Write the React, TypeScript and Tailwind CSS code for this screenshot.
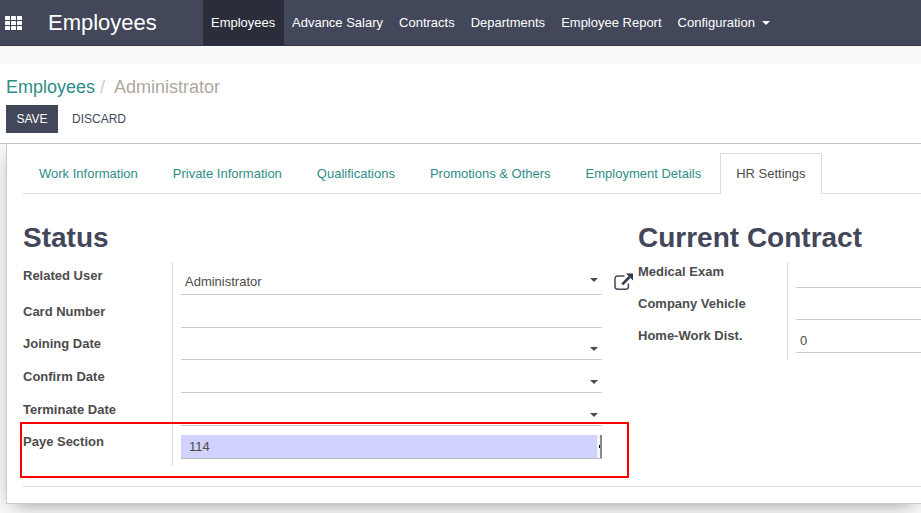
import type { ReactNode } from "react";

const menu = ["Advance Salary", "Contracts", "Departments", "Employee Report"];

const tabs = [
  "Work Information",
  "Private Information",
  "Qualifications",
  "Promotions & Others",
  "Employment Details",
];

function Caret() {
  return (
    <svg width="8" height="4" viewBox="0 0 8 4" fill="currentColor" aria-hidden="true">
      <path d="M0 0h8L4 4z" />
    </svg>
  );
}

function AppsIcon() {
  const cells = [0, 6, 12];
  return (
    <svg width="17" height="14" viewBox="0 0 17 14" fill="currentColor" aria-hidden="true">
      {cells.map((x) =>
        [0, 5, 10].map((y) => <rect key={`${x}-${y}`} x={x} y={y} width="5" height="4" rx="0.6" />)
      )}
    </svg>
  );
}

function ExternalLinkIcon() {
  return (
    <svg width="20" height="18" viewBox="0 0 20 18" fill="none" aria-hidden="true">
      <path
        d="M10.5 3H3.6A2.6 2.6 0 0 0 1 5.600v8A2.600 2.600 0 0 0 3.600 16.200h8.200a2.600 2.600 0 0 0 2.600-2.600V10.500"
        stroke="#43475a"
        strokeWidth="1.5"
      />
      <path d="M8.300 11.300L15.500 4" stroke="#353949" strokeWidth="2.600" />
      <path d="M12 0.500h7v7z" fill="#353949" />
    </svg>
  );
}

type RowProps = {
  id: string;
  label: string;
  children?: ReactNode;
  last?: boolean;
  tall?: boolean;
};

function Row({ id, label, children, last, tall }: RowProps) {
  return (
    <div className="grid grid-cols-[149px_1fr]">
      <label
        htmlFor={id}
        className={`self-end font-bold leading-5 text-[#4c4c4c] ${
          last ? "pb-3.5" : tall ? "pb-3" : "pb-[9px]"
        }`}
      >
        {label}
      </label>
      <div className={`flex items-end border-l border-[#ddd] pl-2 ${last ? "pb-[7px]" : "pb-[3px]"}`}>
        {children}
      </div>
    </div>
  );
}

type FieldProps = { id: string; value?: string; dropdown?: boolean; raised?: boolean };

function TextField({ id, value = "", dropdown, raised }: FieldProps) {
  return (
    <div className="flex h-6 min-w-0 flex-1 items-center border-b border-[#ccc]">
      <input
        id={id}
        defaultValue={value}
        className={`h-full min-w-0 flex-1 bg-transparent px-1 text-[#4c4c4c] outline-none ${
          raised ? "pb-0.5" : ""
        }`}
      />
      {dropdown && (
        <button
          type="button"
          aria-label="Open list"
          className={`self-end px-1 text-[#4c4c4c] ${raised ? "pb-3" : "pb-2"}`}
        >
          <Caret />
        </button>
      )}
    </div>
  );
}

export default function App() {
  return (
    <div className="min-h-screen overflow-hidden bg-[#f9f9f9] font-['Liberation_Sans',Arial,sans-serif] text-[13px] text-[#4c4c4c]">
      <header className="flex h-[46px] items-stretch border-b border-[#2f3342] bg-[#43475a] text-white">
        <button type="button" aria-label="Applications" className="pl-[5px]">
          <AppsIcon />
        </button>
        <div className="flex w-[181px] items-center pl-[26px] text-[22px]">Employees</div>
        <nav className="flex items-stretch whitespace-nowrap">
          <a href="#employees" className="flex min-w-[81px] items-center bg-[#2b2e3a] px-2">
            Employees
          </a>
          {menu.map((item) => (
            <a key={item} href="#menu" className="flex items-center px-2">
              {item}
            </a>
          ))}
          <button type="button" className="flex items-center gap-[7px] px-2">
            Configuration
            <Caret />
          </button>
        </nav>
      </header>

      <section className="mt-[18px] h-20 border-b border-[#c4c4c4] bg-white px-1.5 pt-[11px]">
        <div className="flex gap-[5px] text-[18px] leading-6">
          <a href="#employees" className="text-[#2f8d88]">
            Employees
          </a>
          <span className="text-[#ccc]">/</span>
          <span className="pl-1 text-[#aea79f]">Administrator</span>
        </div>
        <div className="mt-1.5 flex text-xs">
          <button type="button" className="h-7 min-w-[52px] bg-[#43475a] px-2.5 uppercase text-white">
            Save
          </button>
          <button type="button" className="h-7 px-3.5 uppercase text-[#43475a]">
            Discard
          </button>
        </div>
      </section>

      <main className="overflow-hidden pb-2.5 pl-1.5">
        <div className="relative border-b border-l border-[#ccc] bg-white pl-4 pt-[9px] shadow-[0_5px_20px_-8px_#777]">
          <div role="tablist" className="flex gap-[3px] whitespace-nowrap border-b border-[#ddd]">
            {tabs.map((tab) => (
              <button key={tab} type="button" role="tab" className="h-10 px-4 pt-px text-[#2f8d88]">
                {tab}
              </button>
            ))}
            <button
              type="button"
              role="tab"
              aria-selected="true"
              className="-mb-px h-[41px] border border-b-0 border-[#ddd] bg-white px-[15px]"
            >
              HR Settings
            </button>
          </div>

          <div className="grid grid-cols-[615px_1fr] border-b border-[#ddd] pb-5 pt-7">
            <section>
              <h2 className="text-[28px] font-bold leading-8 text-[#43475a]">Status</h2>
              <div className="mt-2 grid w-[611px] grid-rows-[36px_33px_32px_33px_33px_37px]">
                <Row id="user" label="Related User" tall>
                  <TextField id="user" value="Administrator" dropdown raised />
                  <button type="button" aria-label="External link" className="ml-3 pb-1">
                    <ExternalLinkIcon />
                  </button>
                </Row>
                <Row id="card" label="Card Number">
                  <TextField id="card" />
                  <span className="w-8" />
                </Row>
                <Row id="joining" label="Joining Date">
                  <TextField id="joining" dropdown />
                  <span className="w-8" />
                </Row>
                <Row id="confirm" label="Confirm Date">
                  <TextField id="confirm" dropdown />
                  <span className="w-8" />
                </Row>
                <Row id="terminate" label="Terminate Date">
                  <TextField id="terminate" dropdown />
                  <span className="w-8" />
                </Row>
                <Row id="paye" label="Paye Section" last>
                  <div className="flex h-6 flex-1 border-b border-[#bbb]">
                    <select
                      id="paye"
                      defaultValue="114"
                      className="h-full flex-1 appearance-none bg-[#d2d2ff] px-2 text-[#4c4c4c] outline-none"
                    >
                      <option>114</option>
                    </select>
                    <span className="flex w-[5px] items-center justify-end border-r-2 border-[#888] bg-[#f4f4f4]">
                      <span className="h-[3px] w-px bg-black" />
                    </span>
                  </div>
                  <span className="w-8" />
                </Row>
              </div>
            </section>

            <section>
              <h2 className="text-[28px] font-bold leading-8 text-[#43475a]">Current Contract</h2>
              <div className="mt-2 grid grid-rows-[29px_32px_37px]">
                <Row id="exam" label="Medical Exam">
                  <TextField id="exam" />
                </Row>
                <Row id="vehicle" label="Company Vehicle">
                  <TextField id="vehicle" />
                </Row>
                <Row id="distance" label="Home-Work Dist." last>
                  <TextField id="distance" value="0" />
                </Row>
              </div>
            </section>
          </div>
          <div className="h-4" />

          {/* Highlight frame over the Paye Section row */}
          <div className="pointer-events-none absolute bottom-[25px] left-[13px] h-14 w-[609px] border-2 border-[#ff0000]" />
        </div>
      </main>
    </div>
  );
}
